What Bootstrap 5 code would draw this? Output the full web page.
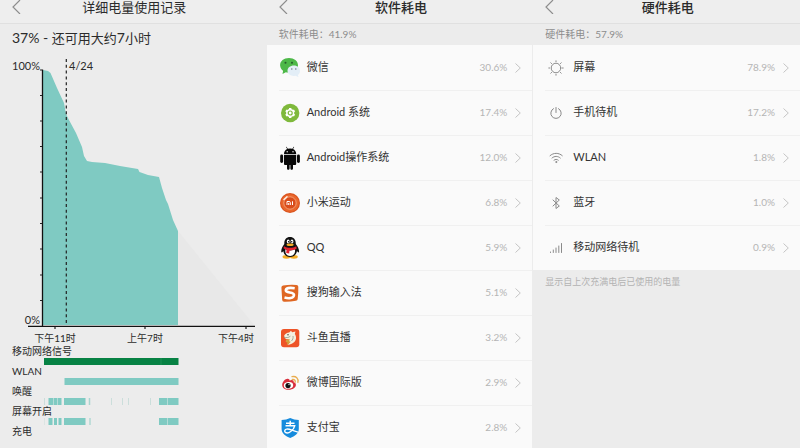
<!DOCTYPE html>
<html lang="zh-CN">
<head>
<meta charset="utf-8">
<meta name="viewport" content="width=device-width, initial-scale=1">
<title>耗电详情</title>
<link href="https://cdn.jsdelivr.net/npm/bootstrap@5.3.0/dist/css/bootstrap.min.css" rel="stylesheet">
<style>
body{background:#ececec;color:#2b2b2b;font-family:Lato,"Noto Sans CJK SC",sans-serif;font-size:11px}
.topbar{border-bottom:1px solid #e0e0e0;padding:0 12px 9px;background:#eee}
.topbar h1{font-size:13px;line-height:14px}
.back{width:10px;height:14px;line-height:0;color:#8d8d8d}
.summary{font-size:13px;line-height:28px;padding-left:12px}
.summary .level{font-size:14px}
.chart{height:293px}
.chart text{font-size:11px;fill:#2b2b2b}
.chart .hours text{font-size:10px}
.timeline dt{font-size:10px;font-weight:400;line-height:13px;height:13px;padding-left:12px}
.timeline dd{height:7px;line-height:0}
.timeline svg{height:7px}
.subhead{font-size:10px;line-height:21px;padding-left:12px;color:#8c8c8c}
.note{font-size:9px;line-height:23px;padding-left:12px;color:#b3b3b3}
.items{background:#fafafa}
.items a{height:45px;padding:0 11px 0 13px;color:#333}
.items a+a{background:linear-gradient(#f0f0f0,#f0f0f0) 12px 0/100% 1px no-repeat}
.items a>svg:first-child{width:20px;height:24px;margin-right:7px;flex:none}
.items .pct{font-size:10px;color:#b5b5b5;margin-right:8px}
.items .go{width:6px;height:12px;color:#c4c4c4}
.line-icon{fill:none;stroke:#8a8a8a;stroke-width:1;stroke-linecap:round}
.apps .items{margin-right:1px}
</style>
<script src="https://cdn.jsdelivr.net/npm/bootstrap@5.3.0/dist/js/bootstrap.bundle.min.js"></script>
</head>
<body>
<svg class="d-none" xmlns="http://www.w3.org/2000/svg">
<symbol id="left" viewBox="0 0 10 14"><path d="M8 0L1 7l7 7" fill="none" stroke="currentColor" stroke-width="1.2"/></symbol>
<symbol id="right" viewBox="0 0 6 12"><path d="M.5 1.5L5.3 6 .5 10.500" fill="none" stroke="currentColor"/></symbol>
</svg>
<main class="container-fluid p-0">
<div class="row g-0 vh-100 overflow-hidden">

<section class="col-4">
<header class="topbar d-flex"><button class="btn border-0 p-0 back" aria-label="返回"><svg width="10" height="14"><use href="#left"/></svg></button><h1 class="flex-fill text-center fw-normal m-0 pe-2">详细电量使用记录</h1></header>
<h2 class="summary fw-normal m-0"><span class="level">37% - </span>还可用大约<span class="level">7</span>小时</h2>
<svg class="chart w-100 d-block" viewBox="0 52 266 293" preserveAspectRatio="xMinYMin meet" role="img" aria-label="电量曲线">
<path d="M178 231L254 325H178z" fill="#e8e8e8"/>
<path d="M43 70L48 71 50.500 73 57 88 64 103 66 114 69 120 76 133 82 147 84 156 87 161 92 162 105 163 120 166 138 169 139.500 172 148 175 159 177 162 188 166 200 168 204 173 220 178 231V325H43z" fill="#7fcac2"/>
<path d="M42.500 69.500V326M28 326.300H255" fill="none" stroke="#111" stroke-width="1.300"/>
<path d="M40 70h2M40 95.500h2M40 121h2M40 146.500h2M40 172h2M40 198h2M40 223.500h2M40 249h2M40 275h2M40 300.500h2M55 327v2M145 327v2M246 327v2" stroke="#222" stroke-width="1.200"/>
<path d="M66.300 59V323" stroke="#222" stroke-width="1.200" stroke-dasharray="3 2.800"/>
<text x="40" y="70" text-anchor="end">100%</text><text x="69" y="70">4/24</text><text x="40" y="324" text-anchor="end">0%</text>
<g class="hours" text-anchor="middle"><text x="55" y="342">下午11时</text><text x="145" y="342">上午7时</text><text x="236" y="342">下午4时</text></g>
</svg>
<dl class="timeline m-0">
<dt>移动网络信号</dt><dd class="m-0"><svg class="w-100 d-block" viewBox="0 0 266 7" preserveAspectRatio="xMinYMin meet"><path d="M44 0h134.500v7H44z" fill="#078244"/><path d="M161 0v7" stroke="#22955c" stroke-width=".8"/></svg></dd>
<dt>WLAN</dt><dd class="m-0"><svg class="w-100 d-block" viewBox="0 0 266 7" preserveAspectRatio="xMinYMin meet"><path d="M64.500 0h114v7h-114z" fill="#7fcac2"/></svg></dd>
<dt>唤醒</dt><dd class="m-0"><svg class="w-100 d-block" viewBox="0 0 266 7" preserveAspectRatio="xMinYMin meet"><path d="M48.500 0h5v7h-5zM54 0h3v7h-3zM57.500 0h4v7h-4zM64 0h21.500v7H64zM159 0h8v7h-8zM167.500 0h11v7h-11z" fill="#7fcac2"/><path d="M44.500 0v7M111.500 0v7M122.500 0v7M128.500 0v7M150.500 0v7" stroke="#cbdedb"/><path d="M89.500 0v7" stroke="#a8d5d0" stroke-width="1.500"/></svg></dd>
<dt>屏幕开启</dt><dd class="m-0"><svg class="w-100 d-block" viewBox="0 0 266 7" preserveAspectRatio="xMinYMin meet"><path d="M48.500 0h4v7h-4zM54 0h3v7h-3zM58.500 0h3v7h-3zM64 0h21.500v7H64zM159 0h8v7h-8zM167.500 0h11v7h-11z" fill="#7fcac2"/><path d="M44.500 0v7" stroke="#dbe5e3"/><path d="M90 0v7" stroke="#b0d8d3" stroke-width="1.500"/></svg></dd>
<dt>充电</dt><dd class="m-0"></dd>
</dl>
</section>

<section class="col-4 apps">
<header class="topbar d-flex"><button class="btn border-0 p-0 back" aria-label="返回"><svg width="10" height="14"><use href="#left"/></svg></button><h1 class="flex-fill text-center fw-medium m-0 pe-2">软件耗电</h1></header>
<div class="subhead">软件耗电：41.9%</div>
<nav class="items">
<a href="#" class="d-flex align-items-center text-decoration-none"><svg viewBox="0 0 20 24"><path d="M9 2C3.500 2-.2 5.500.1 9.500c.2 2.600 1.700 4.300 3 5.300L2.500 18l3.300-1.800c1.400.4 3 .4 4.500.1 4.500-.8 7.700-3.300 7.700-7C18 5 14 2 9 2z" fill="#4db848"/><circle cx="5.500" cy="6.800" r="1" fill="#245c2a"/><circle cx="12" cy="6.800" r="1" fill="#245c2a"/><path d="M14 9.500c-4 0-6.500 2.400-6.500 5.300 0 3 2.700 5.200 6.300 5.200l2-.2 2.700 1.400-.6-2.300c1.300-.9 2.100-2.300 2.100-4 0-3-2.500-5.400-6-5.400z" fill="#e3eef7"/><circle cx="11.800" cy="13" r=".8" fill="#72808a"/><circle cx="15.800" cy="13" r=".8" fill="#72808a"/></svg><span class="flex-fill">微信</span><span class="pct">30.6%</span><svg class="go"><use href="#right"/></svg></a>
<a href="#" class="d-flex align-items-center text-decoration-none"><svg viewBox="0 0 20 24"><circle cx="10.200" cy="12" r="9.200" fill="#7fb93c"/><g fill="#fff"><circle cx="10.200" cy="12" r="4.100"/><path d="M9 7h2.400v10H9z"/><path d="M9 7h2.400v10H9z" transform="rotate(60 10.200 12)"/><path d="M9 7h2.400v10H9z" transform="rotate(120 10.200 12)"/></g><circle cx="10.200" cy="12" r="2" fill="#fff" stroke="#7fb93c" stroke-width="1.200"/></svg><span class="flex-fill">Android 系统</span><span class="pct">17.4%</span><svg class="go"><use href="#right"/></svg></a>
<a href="#" class="d-flex align-items-center text-decoration-none"><svg viewBox="0 0 20 24" fill="#080808"><path d="M4 8c0-2.300 1.300-4 3.200-4.900L6 1l.5-.3 1.300 2.100a7 7 0 0 1 4.600 0L13.700.7l.5.3L13 3.100C15 4 16.200 5.700 16.200 8z"/><path d="M4 8.700h12.200v9c0 .8-.5 1.300-1.300 1.300H13v3.300c0 2-2.600 2-2.600 0V19h-.8v3.300c0 2-2.600 2-2.600 0V19H5.300C4.500 19 4 18.500 4 17.700z"/><rect x="0.200" y="8.600" width="2.900" height="8.400" rx="1.400"/><rect x="17" y="8.600" width="2.900" height="8.400" rx="1.400"/><circle cx="7.200" cy="5.700" r=".7" fill="#fff"/><circle cx="13" cy="5.700" r=".7" fill="#fff"/></svg><span class="flex-fill">Android操作系统</span><span class="pct">12.0%</span><svg class="go"><use href="#right"/></svg></a>
<a href="#" class="d-flex align-items-center text-decoration-none"><svg viewBox="0 0 20 24"><circle cx="10" cy="12" r="10" fill="#d9531e"/><circle cx="10" cy="12" r="8.800" fill="#ea672c"/><circle cx="10" cy="12" r="6.200" fill="#d94d1b" stroke="#f4ae88" stroke-width=".8"/><path d="M7 14v-3.500h2.200q1.100 0 1.100 1.100V14M8.700 12v2M12.500 10.300V14" fill="none" stroke="#fff" stroke-width="1"/><path d="M4 8.500L7 5.800" stroke="#fff1e8" stroke-width="1.500" stroke-linecap="round"/></svg><span class="flex-fill">小米运动</span><span class="pct">6.8%</span><svg class="go"><use href="#right"/></svg></a>
<a href="#" class="d-flex align-items-center text-decoration-none"><svg viewBox="0 0 20 24"><ellipse cx="6.500" cy="20.800" rx="4" ry="1.900" fill="#f4ab23"/><ellipse cx="13.800" cy="20.800" rx="4" ry="1.900" fill="#f4ab23"/><path d="M10 1C6.200 1 4.100 3.700 4.300 8c-1.800 2.500-3.400 5.500-3 8 .3 1 1.300.3 2-1 .5 3.500 3 6 6.800 6s6.300-2.500 6.900-6c.7 1.300 1.700 2 2 1 .4-2.500-1.200-5.500-3.200-8C16 3.700 13.700 1 10 1z" fill="#111"/><path d="M5.500 13c1 1 2.300 1.400 4.600 1.400s3.800-.5 4.800-1.400c.8 4-1.200 7-4.800 7s-5.400-3-4.600-7z" fill="#fff"/><path d="M4 10.300c3.200 2 8.900 2 12.200 0l.5 2.200c-2.200 1.500-4.700 2-7.200 1.900l-.3 3.200-3-.6.300-3.200c-1.200-.4-2.200-.9-3-1.500z" fill="#e52330"/><ellipse cx="8.200" cy="5.500" rx="1.400" ry="2" fill="#fff"/><ellipse cx="12" cy="5.500" rx="1.400" ry="2" fill="#fff"/><circle cx="8.600" cy="5.700" r=".7"/><circle cx="11.700" cy="5.700" r=".7"/><ellipse cx="10.100" cy="8.800" rx="3.600" ry="1.200" fill="#f4ab23"/></svg><span class="flex-fill">QQ</span><span class="pct">5.9%</span><svg class="go"><use href="#right"/></svg></a>
<a href="#" class="d-flex align-items-center text-decoration-none"><svg viewBox="0 0 20 24"><path d="M3 4.500Q10 3.500 16.500 4q1.800 0 1.800 1.800.2 6.500-.6 12.200-.2 1.600-1.700 1.800-6 1.200-12 1-1.700 0-1.800-1.700L1.400 6.500Q1.400 4.800 3 4.500z" fill="#df6723"/><path d="M14.700 7.200Q6 6 5.800 9.300C5.700 12.300 14.200 10.500 14 14c-.2 3.600-5.500 3.700-9.500 2.600" fill="none" stroke="#fff" stroke-width="2.600"/></svg><span class="flex-fill">搜狗输入法</span><span class="pct">5.1%</span><svg class="go"><use href="#right"/></svg></a>
<a href="#" class="d-flex align-items-center text-decoration-none"><svg viewBox="0 0 20 24"><rect x="1" y="3" width="18.300" height="18.300" rx="3" fill="#ee5427"/><path d="M4 10c1-2.300 3-3.400 5.200-3.500L11 4.800l1.100 1.400 3.400-.7-.7 2.400c2 2.800 1.600 6.400-.8 8.300-1.800 1.600-4 2-6 3l1.800-3.800-1.900.1 1-2.500c-1.500.5-3.200.2-3.900-1z" fill="#f4f0df"/><path d="M6 14l4-.8-1 2.400 2 .2-4.300 3.800.8-3-1.800-.5z" fill="#d4a43d"/><path d="M4 11c2 1 4.600.8 6.400-.8M13 10c.4 2-.3 4-1.600 5" fill="none" stroke="#8d9a8a" stroke-width=".8"/><circle cx="8" cy="8.800" r=".7" fill="#333"/></svg><span class="flex-fill">斗鱼直播</span><span class="pct">3.2%</span><svg class="go"><use href="#right"/></svg></a>
<a href="#" class="d-flex align-items-center text-decoration-none"><svg viewBox="0 0 20 24"><path d="M8.500 8c-2-1.400-6 2-6.300 5.500C2 17 5.300 19 8.800 18.800c4 0 7.200-2.300 7.100-5 0-1.400-1-2.200-2.300-2.500.6-2.200-1.200-2.900-4.200-1.800.3-.7 0-1.200-.9-1.500z" fill="#d92e3c"/><ellipse cx="8.500" cy="14.400" rx="4.700" ry="3.400" fill="#fff" transform="rotate(-8 8.500 14.400)"/><circle cx="8" cy="14.600" r="2.600" fill="#111"/><circle cx="9" cy="13.600" r=".7" fill="#fff"/><path d="M12.300 8.500c2-.5 3.300.8 2.900 2.600M12 5.700c4-1 6.800 1.800 5.900 5.600" fill="none" stroke="#e9ad4f" stroke-width="1.300" stroke-linecap="round"/></svg><span class="flex-fill">微博国际版</span><span class="pct">2.9%</span><svg class="go"><use href="#right"/></svg></a>
<a href="#" class="d-flex align-items-center text-decoration-none"><svg viewBox="0 0 20 24"><path d="M10.200 2Q14 4 18.800 4v9c0 4.500-4 7-8.600 9-4.600-2-8.600-4.500-8.600-9V4Q6.400 4 10.200 2z" fill="#168bdd"/><path d="M6 7.200h8.500M10.200 4.800v5M5.500 9.800h9.200c-.5 2-1.700 4-3.700 5.500-2 1.600-4.300 2-5.600 1.100-1.300-1-.7-3 1.300-3.300 3-.4 6.500 2 11.300 3" fill="none" stroke="#fff" stroke-width="1.400"/></svg><span class="flex-fill">支付宝</span><span class="pct">2.8%</span><svg class="go"><use href="#right"/></svg></a>
</nav>
</section>

<section class="col-4">
<header class="topbar d-flex"><button class="btn border-0 p-0 back" aria-label="返回"><svg width="10" height="14"><use href="#left"/></svg></button><h1 class="flex-fill text-center fw-medium m-0 pe-2">硬件耗电</h1></header>
<div class="subhead">硬件耗电：57.9%</div>
<nav class="items">
<a href="#" class="d-flex align-items-center text-decoration-none"><svg class="line-icon" viewBox="0 0 20 24"><circle cx="10" cy="12" r="4.800"/><path d="M10 4.800v.8M10 18.400v.8M2.800 12h.8M16.400 12h.8M4.800 6.800l.8.800M14.400 16.400l.8.800M4.800 17.200l.8-.8M14.400 7.600l.8-.8"/></svg><span class="flex-fill">屏幕</span><span class="pct">78.9%</span><svg class="go"><use href="#right"/></svg></a>
<a href="#" class="d-flex align-items-center text-decoration-none"><svg class="line-icon" viewBox="0 0 20 24"><path d="M7.500 7.600a5.200 5.200 0 1 0 5 0M10 6.500v5"/></svg><span class="flex-fill">手机待机</span><span class="pct">17.2%</span><svg class="go"><use href="#right"/></svg></a>
<a href="#" class="d-flex align-items-center text-decoration-none"><svg class="line-icon" viewBox="0 0 20 24"><path d="M4 9.700c3.500-3.200 8.800-3.200 12.300 0M6 12c2.500-2.200 5.900-2.200 8.300 0M8 14.200c1.400-1.100 2.900-1.100 4.300 0"/><circle cx="10.200" cy="16" r=".5" fill="#8a8a8a"/></svg><span class="flex-fill">WLAN</span><span class="pct">1.8%</span><svg class="go"><use href="#right"/></svg></a>
<a href="#" class="d-flex align-items-center text-decoration-none"><svg class="line-icon" viewBox="0 0 20 24"><path d="M7 9l6.300 6-3.300 2.500v-11L13.300 9 7 15"/></svg><span class="flex-fill">蓝牙</span><span class="pct">1.0%</span><svg class="go"><use href="#right"/></svg></a>
<a href="#" class="d-flex align-items-center text-decoration-none"><svg class="line-icon" viewBox="0 0 20 24"><path d="M4.500 16v.5M7.300 14v2.500M10 12v4.500M12.800 10v6.500M15.500 7.500v9"/></svg><span class="flex-fill">移动网络待机</span><span class="pct">0.9%</span><svg class="go"><use href="#right"/></svg></a>
</nav>
<div class="note">显示自上次充满电后已使用的电量</div>
</section>
</div>
</main>
</body>
</html>
